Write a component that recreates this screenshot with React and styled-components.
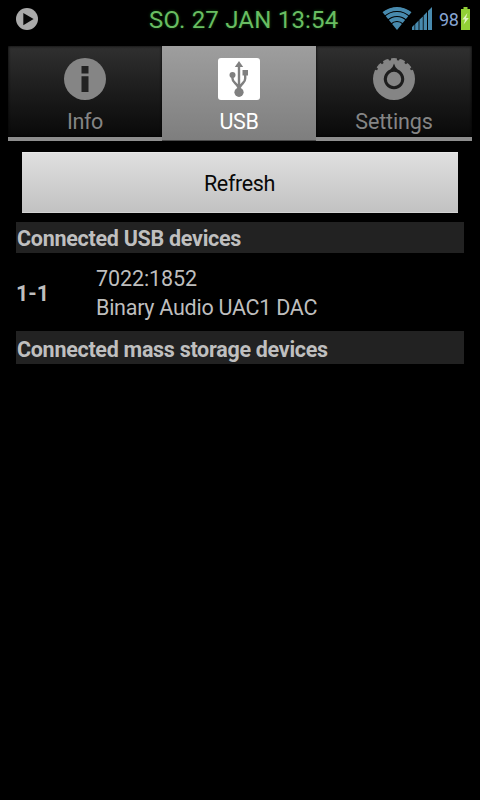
import React from "react";
import styled, { createGlobalStyle } from "styled-components";

const GlobalStyle = createGlobalStyle`
  * { box-sizing: border-box; }
  body { margin: 0; background: #000; font-family: Roboto, sans-serif; }
  svg { display: block; }
`;

const Screen = styled.div`
  width: 480px;
  height: 800px;
  background: #000;
  color: #bebebe;
  font-size: 21.5px;
  overflow: hidden;
`;

const StatusBar = styled.header`
  height: 38px;
  display: grid;
  grid-template-columns: 149px 1fr 98px;
  align-items: start;
`;

const Notifications = styled.div`
  padding: 8px 0 0 16px;
`;

const Clock = styled.time`
  color: #69bd62;
  font-size: 24px;
  line-height: 28px;
  padding-top: 6px;
  white-space: nowrap;
  letter-spacing: ${(p) => p.$spacing}px;
  text-shadow: 0 0 3px #0f4d0f;
`;

const SystemIcons = styled.div`
  display: flex;
  align-items: flex-start;
  padding-top: 7px;
`;

const BatteryLevel = styled.span`
  width: 24px;
  padding-left: 7px;
  padding-top: 1px;
  font-size: 18px;
  line-height: 24px;
  letter-spacing: -0.4px;
  color: #87a5d3;
`;

const BatteryIcon = styled.svg`
  margin-left: 5px;
`;

const Tabs = styled.nav`
  display: grid;
  grid-template-columns: 154px 154px 156px;
  width: 464px;
  height: 95px;
  margin: 8px 8px 0;
`;

const Tab = styled.button`
  display: flex;
  flex-direction: column;
  align-items: center;
  height: 95px;
  padding: 12px 0 0;
  border: solid ${(p) => (p.$active ? "#4a4a4a" : "#8d8d8d")};
  border-width: 0 0 ${(p) => (p.$active ? 1 : 4)}px;
  background: ${(p) =>
    p.$active
      ? "linear-gradient(#9e9e9e, #7e7e7e)"
      : "linear-gradient(#303030, #1c1c1c 50%, #090909)"};
  box-shadow: ${(p) => (p.$active ? "none" : "inset 0 0 3px #000")};
  color: ${(p) => (p.$active ? "#fff" : "#858585")};
  font: 400 21.5px/28px Roboto, sans-serif;
`;

const TabLabel = styled.span`
  margin-top: 8px;
  letter-spacing: ${(p) => p.$spacing}px;
`;

const RefreshButton = styled.button`
  display: block;
  width: 436px;
  height: 61px;
  margin: 11px 22px 0;
  padding: 3px 1px 0 0;
  border: 0;
  border-top: 1px solid #e8e8e8;
  border-bottom: 1px solid #d2d2d2;
  background: linear-gradient(#dfdfdf, #c2c2c2);
  color: #080808;
  font: 400 21.5px/28px Roboto, sans-serif;
  letter-spacing: ${(p) => p.$spacing}px;
`;

const SectionTitle = styled.h2`
  width: 448px;
  height: ${(p) => p.$height}px;
  margin: 0 16px;
  padding: ${(p) => p.$top}px 0 0 1px;
  background: #222;
  color: #bfbfbf;
  font-size: 21.5px;
  font-weight: 700;
  line-height: 28px;
  letter-spacing: ${(p) => p.$spacing}px;
  white-space: nowrap;
`;

const Sections = styled.main`
  padding-top: 9px;
`;

const DeviceRow = styled.div`
  display: grid;
  grid-template-columns: 80px 1fr;
  align-items: center;
  height: 78px;
  padding: 2px 16px 0;
`;

const DevicePort = styled.strong`
  font-weight: 700;
  letter-spacing: ${(p) => p.$spacing}px;
`;

const DeviceInfo = styled.div`
  display: flex;
  flex-direction: column;
  line-height: 29px;
`;

const DeviceLine = styled.span`
  letter-spacing: ${(p) => p.$spacing}px;
`;

function PlayIcon() {
  return (
    <svg width="23" height="23" viewBox="0 0 23 23">
      <circle cx="11" cy="11" r="11" fill="#aaa" />
      <path d="M7.3 5v12.3L17.6 11z" fill="#080808" />
    </svg>
  );
}

function WifiIcon() {
  return (
    <svg width="30" height="24" viewBox="0 0 30 24">
      <defs>
        <clipPath id="fan"><path d="M0 4.5Q15-5 30 4.5L15 23z" /></clipPath>
      </defs>
      <g clipPath="url(#fan)" fill="none" stroke="#488aae" strokeWidth="3.9">
        <circle cx="15" cy="23" r="21" />
        <circle cx="15" cy="23" r="16" />
        <circle cx="15" cy="23" r="11" />
        <circle cx="15" cy="23" r="7.9" fill="#488aae" stroke="none" />
      </g>
    </svg>
  );
}

function SignalIcon() {
  return (
    <svg width="20" height="24" viewBox="0 0 20 24">
      <path
        d="M0 20l2.5-2.5V23H0zM3.2 16.9l3.4-3.4V23H3.2zM7.4 12.8l3.4-3.4V23H7.4zM11.6 8.5L15 5.1V23h-3.4zM16 4l4-4v23h-4z"
        fill="#488aae"
      />
    </svg>
  );
}

function Battery() {
  return (
    <BatteryIcon width="9" height="24" viewBox="0 0 9 24">
      <path d="M2.5 0h4v2H9v21H0V2h2.5z" fill="#92cf36" />
      <path d="M6.5 6L1.3 12.6h2.8L2.6 17.5l5.2-6.6H5z" fill="#e0f3c0" />
    </BatteryIcon>
  );
}

function InfoIcon() {
  return (
    <svg width="42" height="42" viewBox="0 0 42 42">
      <circle cx="21" cy="21" r="21" fill="#858585" />
      <path d="M17.5 8h7v7.5h-7zM17.5 18.3h7V34h-7z" fill="#222" />
    </svg>
  );
}

function UsbIcon() {
  return (
    <svg width="42" height="42" viewBox="0 0 42 42">
      <rect width="42" height="42" rx="3" fill="#fff" />
      <g fill="#808080">
        <path d="M21 3l4.2 6h-8.4z" />
        <circle cx="21" cy="34.3" r="4.6" />
        <circle cx="14.5" cy="17" r="3" />
        <path d="M24.5 12h5.5v5.5h-5.5z" />
      </g>
      <path
        d="M21 8v25M14.5 17v3.5Q14.5 23 17 25T21 30.5M27.2 16v4.5Q27.2 23 25 25T21 30.5"
        fill="none"
        stroke="#808080"
        strokeWidth="2.4"
      />
    </svg>
  );
}

const notchAngles = [-60, -36, -12, 12, 36, 60];

function SettingsIcon() {
  return (
    <svg width="42" height="42" viewBox="0 0 42 42">
      <circle cx="21" cy="21" r="21" fill="#858585" />
      {notchAngles.map((angle) => (
        <path
          key={angle}
          d="M19.2-1h3.6l-.8 3h-2z"
          transform={`rotate(${angle} 21 21)`}
          fill="#292929"
        />
      ))}
      <path d="M21 5.5Q22 9.5 24.8 11.6a10.2 10.2 0 1 1-7.6 0Q20 9.5 21 5.5z" fill="#1d1d1d" />
      <circle cx="21" cy="21" r="7.2" fill="#858585" />
    </svg>
  );
}

const tabs = [
  { label: "Info", Icon: InfoIcon, spacing: -0.4 },
  { label: "USB", Icon: UsbIcon, active: true, spacing: -0.3 },
  { label: "Settings", Icon: SettingsIcon, spacing: -0.15 },
];

export default function App() {
  return (
    <>
      <GlobalStyle />
      <Screen>
        <StatusBar>
          <Notifications><PlayIcon /></Notifications>
          <Clock $spacing={0.2}>SO. 27 JAN 13:54</Clock>
          <SystemIcons>
            <WifiIcon />
            <SignalIcon />
            <BatteryLevel>98</BatteryLevel>
            <Battery />
          </SystemIcons>
        </StatusBar>
        <Tabs>
          {tabs.map(({ label, Icon, active, spacing }) => (
            <Tab key={label} $active={active}>
              <Icon />
              <TabLabel $spacing={spacing}>{label}</TabLabel>
            </Tab>
          ))}
        </Tabs>
        <RefreshButton $spacing={-0.35}>Refresh</RefreshButton>
        <Sections>
          <SectionTitle $height={31} $top={3} $spacing={-0.28}>Connected USB devices</SectionTitle>
          <DeviceRow>
            <DevicePort $spacing={0}>1-1</DevicePort>
            <DeviceInfo>
              <DeviceLine $spacing={-0.1}>7022:1852</DeviceLine>
              <DeviceLine $spacing={-0.26}>Binary Audio UAC1 DAC</DeviceLine>
            </DeviceInfo>
          </DeviceRow>
          <SectionTitle $height={33} $top={5} $spacing={-0.29}>Connected mass storage devices</SectionTitle>
        </Sections>
      </Screen>
    </>
  );
}
